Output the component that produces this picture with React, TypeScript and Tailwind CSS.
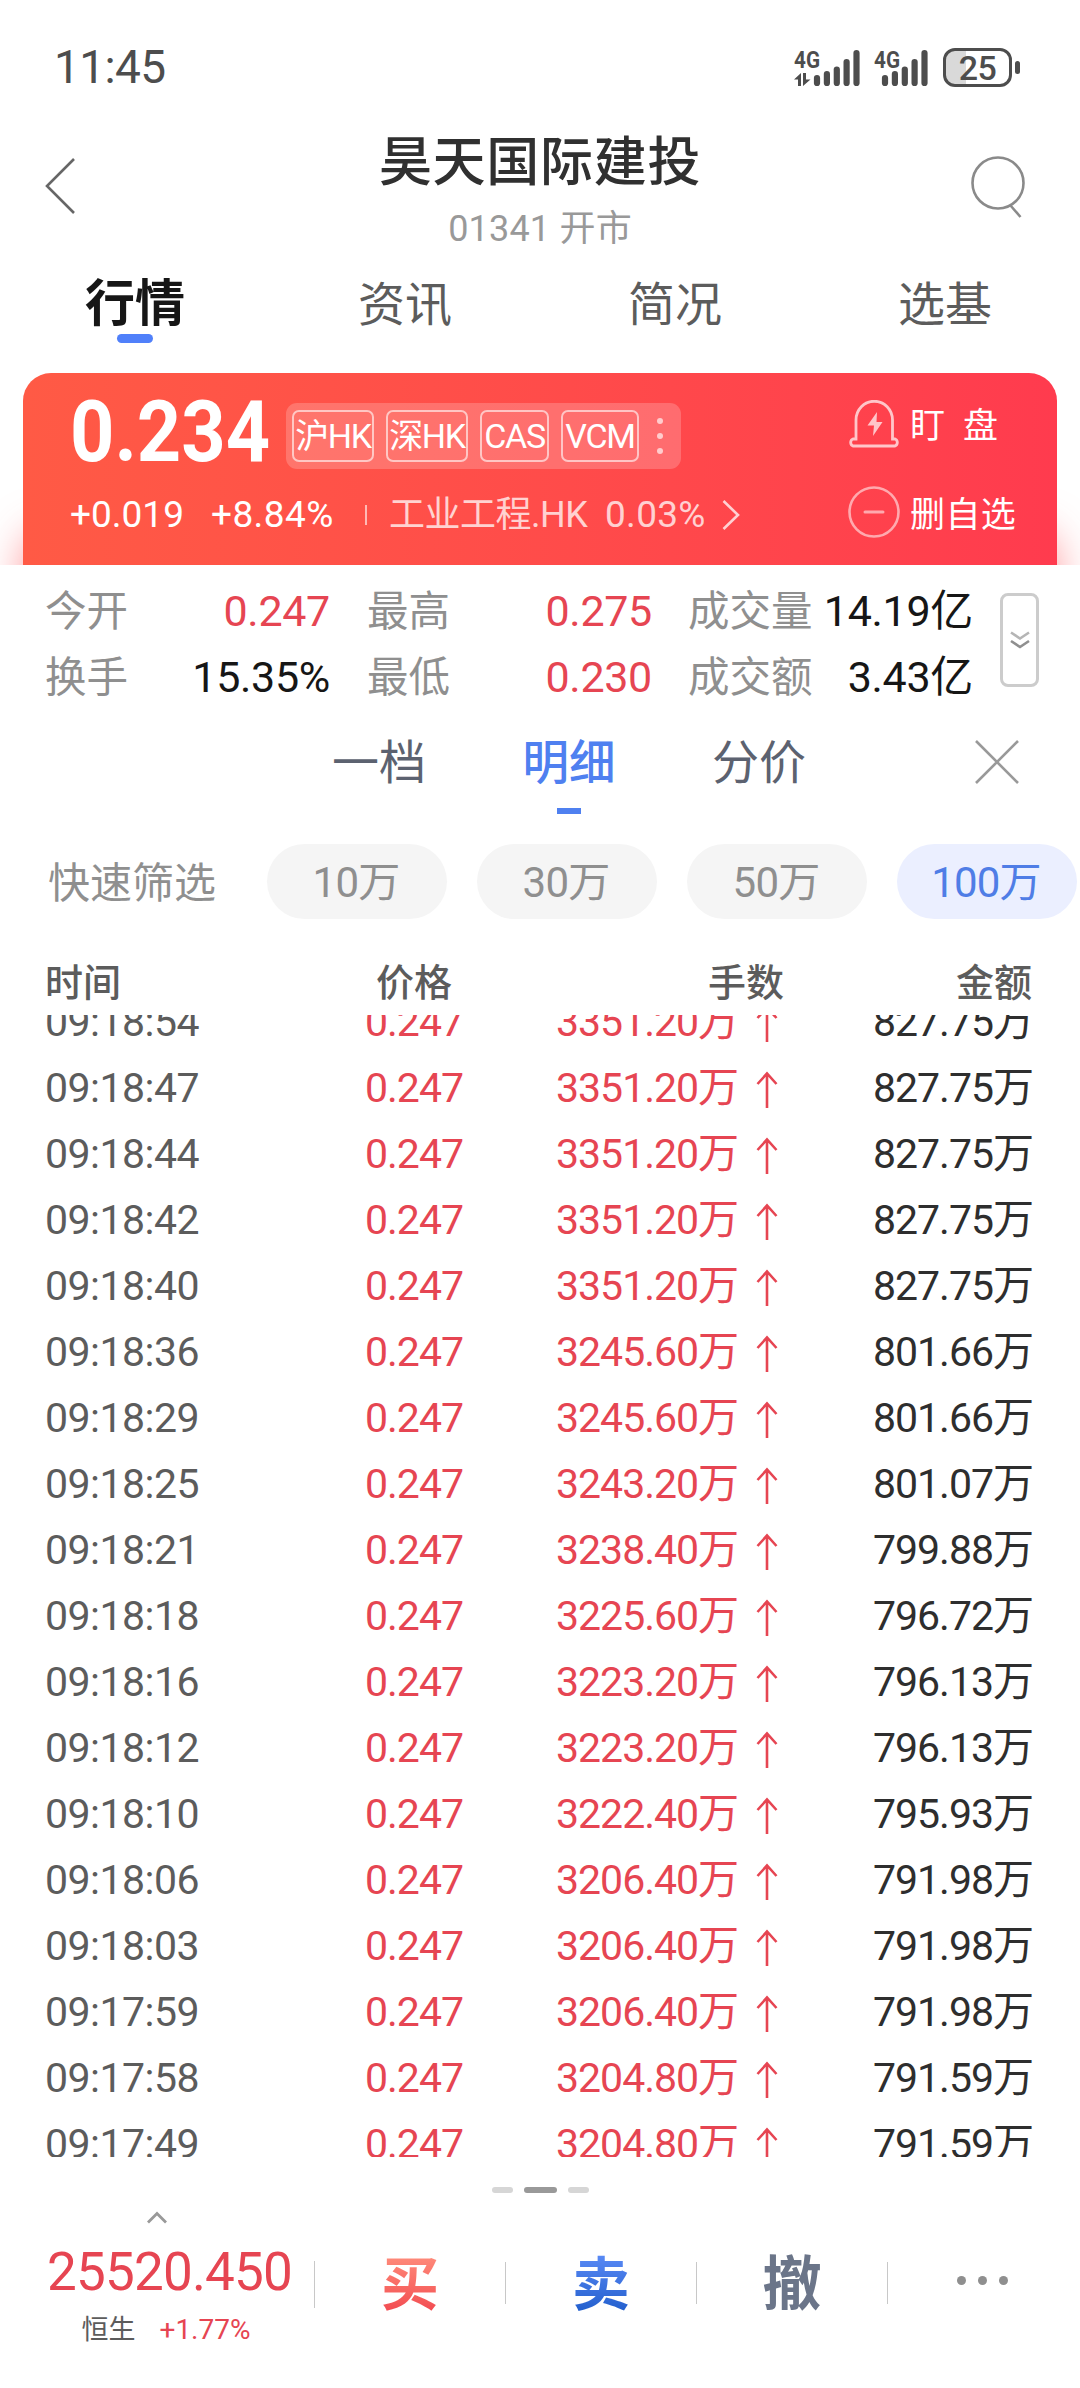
import React, { useState } from 'react';

type Trade = {
  time: string;
  volume: string;
  amount: string;
};

const tabs = ['行情', '资讯', '简况', '选基'];
const badges = [
  { label: '沪HK', width: 'w-[82px]' },
  { label: '深HK', width: 'w-[82px]' },
  { label: 'CAS', width: 'w-[69px]' },
  { label: 'VCM', width: 'w-[78px]' },
];
const detailTabs = ['一档', '明细', '分价'];
const filters = ['10万', '30万', '50万', '100万'];

const trades: Trade[] = [
  { time: '09:18:54', volume: '3351.20万', amount: '827.75万' },
  { time: '09:18:47', volume: '3351.20万', amount: '827.75万' },
  { time: '09:18:44', volume: '3351.20万', amount: '827.75万' },
  { time: '09:18:42', volume: '3351.20万', amount: '827.75万' },
  { time: '09:18:40', volume: '3351.20万', amount: '827.75万' },
  { time: '09:18:36', volume: '3245.60万', amount: '801.66万' },
  { time: '09:18:29', volume: '3245.60万', amount: '801.66万' },
  { time: '09:18:25', volume: '3243.20万', amount: '801.07万' },
  { time: '09:18:21', volume: '3238.40万', amount: '799.88万' },
  { time: '09:18:18', volume: '3225.60万', amount: '796.72万' },
  { time: '09:18:16', volume: '3223.20万', amount: '796.13万' },
  { time: '09:18:12', volume: '3223.20万', amount: '796.13万' },
  { time: '09:18:10', volume: '3222.40万', amount: '795.93万' },
  { time: '09:18:06', volume: '3206.40万', amount: '791.98万' },
  { time: '09:18:03', volume: '3206.40万', amount: '791.98万' },
  { time: '09:17:59', volume: '3206.40万', amount: '791.98万' },
  { time: '09:17:58', volume: '3204.80万', amount: '791.59万' },
  { time: '09:17:49', volume: '3204.80万', amount: '791.59万' },
];

function Signal({ data }: { data?: boolean }) {
  // the SIM that carries data has its bars pushed right by the arrows
  const x = data ? 23 : 11;
  return (
    <svg className="overflow-visible" width={data ? 68 : 56} height="40" viewBox={data ? '0 0 68 40' : '0 0 56 40'} fill="none">
      <text x="0" y="19.5" fontSize="24.5" fontWeight="700" fill="#4d4d4d" textLength="26" lengthAdjust="spacingAndGlyphs">
        4G
      </text>
      {data && (
        <path
          d="M0 31.5L7 25V38H4V31.500ZM9 25H12V31.500H16.500L9 38Z"
          fill="#4d4d4d"
        />
      )}
      <g stroke="#4d4d4d" strokeWidth="6.2" strokeLinecap="round">
        <path d={`M${x} 30V35`} />
        <path d={`M${x + 9.9} 26V35`} />
        <path d={`M${x + 19.8} 21.5V35`} />
        <path d={`M${x + 29.6} 14V35`} />
        <path d={`M${x + 39.5} 5V35`} />
      </g>
    </svg>
  );
}

function StatusBar() {
  return (
    <div className="flex h-[135px] items-center pl-[54px] pr-[60px] text-[#4d4d4d]">
      <span className="text-[46px] tracking-[-0.6px]">11:45</span>
      <div className="ml-auto flex items-center">
        <Signal data />
        <div className="ml-[12px]">
          <Signal />
        </div>
        <div className="ml-[13px] flex h-[39px] w-[69px] items-center justify-center rounded-[12px] border-[3px] border-[#4d4d4d] bg-linear-to-r from-[#d9d9d9] from-31% to-white to-31% text-[34px] leading-none font-medium tracking-[-0.5px]">
          25
        </div>
        <div className="ml-[3px] h-[13px] w-[5px] rounded-full bg-[#4d4d4d]" />
      </div>
    </div>
  );
}

function Header() {
  return (
    <header className="grid h-[127px] grid-cols-[200px_1fr_200px] items-start pl-[44px] pr-[44px]">
      <svg className="mt-[22px]" width="32" height="58" viewBox="0 0 32 58" fill="none">
        <path d="M30 2L3 29L30 56" stroke="#666" strokeWidth="2.6" />
      </svg>
      <div className="flex flex-col items-center">
        <h1 className="mt-[1px] text-[53px] leading-[54px] font-medium tracking-[0.7px] text-[#303030]">昊天国际建投</h1>
        <p className="mt-[12px] text-[36px] leading-[54px] tracking-[0.2px] text-[#999]">01341 开市</p>
      </div>
      <svg className="mt-[20px] mr-[10px] justify-self-end" width="56" height="64" viewBox="0 0 56 64" fill="none" stroke="#8a8a8a" strokeWidth="2.6">
        <circle cx="28" cy="28" r="25.5" />
        <path d="M40.5 50.5L50.5 62" />
      </svg>
    </header>
  );
}

function Tabs() {
  const [active, setActive] = useState('行情');

  return (
    <nav className="grid h-[111px] grid-cols-4 pt-[12px]">
      {tabs.map((tab) => (
        <button key={tab} onClick={() => setActive(tab)} className="flex flex-col items-center">
          <span
            className={
              active === tab
                ? 'text-[50px] leading-[60px] font-bold text-[#161616]'
                : 'text-[47px] leading-[61px] text-[#5c5c5c]'
            }
          >
            {tab}
          </span>
          {active === tab && <span className="h-[9px] w-[36px] rounded-full bg-[#5080fa]" />}
        </button>
      ))}
    </nav>
  );
}

function PriceCard() {
  return (
    <section className="h-[192px] overflow-hidden px-[23px]">
      <div className="flex h-full rounded-t-[28px] bg-linear-to-r from-[#ff5a45] to-[#ff3b4e] pl-[47px] text-white shadow-[0_158px_40px_0_rgba(255,70,75,0.55)]">
        <div className="w-[778px]">
          <div className="mt-[30px] flex h-[66px] items-center">
            <span className="w-[216px] origin-left scale-x-90 pb-[8px] text-[86px] leading-[66px] font-bold">0.234</span>
            <div className="flex h-[66px] w-[395px] items-center gap-[12px] rounded-[11px] bg-white/20 pl-[6px]">
              {badges.map((badge) => (
                <span
                  key={badge.label}
                  className={`${badge.width} flex h-[52px] items-center justify-center rounded-[7px] border-2 border-white/60 text-[34px] leading-none tracking-[-1.3px] whitespace-nowrap`}
                >
                  {badge.label}
                </span>
              ))}
              <span className="ml-[6px] flex flex-col gap-[9px]">
                <i className="size-[6px] rounded-full bg-white/65" />
                <i className="size-[6px] rounded-full bg-white/65" />
                <i className="size-[6px] rounded-full bg-white/65" />
              </span>
            </div>
          </div>
          <div className="mt-[21px] flex h-[50px] items-center text-[37px] whitespace-nowrap">
            <span className="w-[141px]">+0.019</span>
            <span className="w-[154px] tracking-[0.4px]">+8.84%</span>
            <span className="mr-[22px] h-[20px] w-[2px] bg-white/60" />
            <span className="w-[216px] text-[36px] tracking-[-0.5px] text-white/75">工业工程.HK</span>
            <span className="w-[116px] tracking-[0.3px] text-white/75">0.03%</span>
            <svg width="20" height="32" viewBox="0 0 20 32" fill="none">
              <path d="M2.5 2L17 16L2.5 30" stroke="white" strokeOpacity="0.75" strokeWidth="2.6" />
            </svg>
          </div>
        </div>
        <div className="flex flex-col text-[35px] leading-[50px]">
          <div className="mt-[26px] flex h-[50px] items-center">
            <svg width="52" height="48" viewBox="0 0 52 48" fill="none">
              <path
                d="M8 39V20A18 18.5 0 0 1 44.5 20V39H47A3.8 3.8 0 0 1 47 46H5A3.8 3.8 0 0 1 5 39Z"
                stroke="white"
                strokeOpacity="0.7"
                strokeWidth="2.8"
              />
              <path d="M29 12L19.5 25.5H26L25 36L34.5 22H28.5Z" fill="white" fillOpacity="0.7" />
            </svg>
            <span className="ml-[10px] pt-[5px]">盯</span>
            <span className="ml-[18px] pt-[5px]">盘</span>
          </div>
          <div className="mt-[38px] flex h-[50px] items-center">
            <svg width="52" height="52" viewBox="0 0 52 52" fill="none" stroke="white">
              <circle cx="26" cy="26" r="24.5" strokeOpacity="0.55" strokeWidth="2.6" />
              <path d="M17 26H35" strokeOpacity="0.55" strokeWidth="3" strokeLinecap="round" />
            </svg>
            <span className="ml-[10px] pt-[7px] tracking-[0.4px]">删自选</span>
          </div>
        </div>
      </div>
    </section>
  );
}

function Stat({ label, value, red }: { label: string; value: string; red?: boolean }) {
  return (
    <div className="flex h-[66px] items-center justify-between whitespace-nowrap">
      <span className="pt-[3px] text-[41.5px] text-[#8f8f8f]">{label}</span>
      <span className={red ? 'text-[43px] tracking-[-0.3px] text-[#e64552]' : 'text-[43px] tracking-[-0.3px] text-[#161616]'}>
        {value}
      </span>
    </div>
  );
}

function Stats() {
  return (
    <section className="flex h-[145px] pt-[13px] pl-[45px]">
      <div className="w-[285px]">
        <Stat label="今开" value="0.247" red />
        <Stat label="换手" value="15.35%" />
      </div>
      <div className="ml-[37px] w-[285px]">
        <Stat label="最高" value="0.275" red />
        <Stat label="最低" value="0.230" red />
      </div>
      <div className="ml-[36px] w-[285px]">
        <Stat label="成交量" value="14.19亿" />
        <Stat label="成交额" value="3.43亿" />
      </div>
      <button className="mt-[15px] ml-[27px] flex h-[94px] w-[39px] items-center justify-center rounded-[8px] border-[3px] border-[#ccc]">
        <svg width="20" height="18" viewBox="0 0 20 18" fill="none" strokeWidth="2.6">
          <path d="M1 1.5L10 7.5L19 1.5" stroke="#b5b5b5" />
          <path d="M1 10L10 16L19 10" stroke="#8f8f8f" />
        </svg>
      </button>
    </section>
  );
}

function DetailTabs() {
  const [active, setActive] = useState('明细');

  return (
    <nav className="flex h-[134px] pt-[23px] pl-[284px]">
      {detailTabs.map((tab) => (
        <button key={tab} onClick={() => setActive(tab)} className="flex w-[190px] flex-col items-center">
          <span
            className={
              active === tab
                ? 'text-[46.5px] leading-[60px] font-medium text-[#4f80f0]'
                : 'text-[47px] leading-[60px] text-[#5c6270]'
            }
          >
            {tab}
          </span>
          {active === tab && <span className="mt-[15px] h-[6px] w-[24px] bg-[#4f80f0]" />}
        </button>
      ))}
      <svg className="mt-[6px] ml-[120px]" width="46" height="46" viewBox="0 0 46 46" fill="none">
        <path d="M2 2L44 44M44 2L2 44" stroke="#999" strokeWidth="2.6" />
      </svg>
    </nav>
  );
}

function Filters() {
  const [active, setActive] = useState('100万');

  return (
    <div className="flex h-[75px] items-center pl-[48px]">
      <span className="w-[219px] pt-[3px] text-[42px] text-[#8f8f8f]">快速筛选</span>
      <div className="flex gap-[30px]">
        {filters.map((item) => (
          <button
            key={item}
            onClick={() => setActive(item)}
            className={`flex h-[75px] w-[180px] items-center justify-center rounded-full pt-[2px] pr-[2px] text-[42px] tracking-[-0.8px] ${
              active === item ? 'bg-[#ebefff] text-[#4f7de6]' : 'bg-[#f5f5f5] text-[#8f8f8f]'
            }`}
          >
            {item}
          </button>
        ))}
      </div>
    </div>
  );
}

function TradeTable() {
  return (
    <section>
      <div className="mt-[31px] flex h-[65px] items-center pl-[45px] text-[38px] leading-none font-medium text-[#5c5c5c]">
        <span className="w-[331px]">时间</span>
        <span className="w-[332px]">价格</span>
        <span className="w-[248px]">手数</span>
        <span>金额</span>
      </div>
      <div className="h-[1142px] overflow-hidden">
        <div className="-mt-[26px]">
          {trades.map((trade) => (
            <div
              key={trade.time}
              className="flex h-[66px] items-center pl-[45px] text-[41px] leading-none tracking-[-1px] whitespace-nowrap"
            >
              <span className="w-[320px] tracking-[-0.5px] text-[#5c5c5c]">{trade.time}</span>
              <span className="w-[191px] text-[#e64552]">0.247</span>
              <span className="w-[200px] text-[#e64552]">{trade.volume}</span>
              <svg className="mt-[3px]" width="22" height="38" viewBox="0 0 22 38" fill="none">
                <path d="M11 37V2.5M1.5 13L11 2.5L20.5 13" stroke="#e64552" strokeWidth="2.6" />
              </svg>
              <span className="ml-auto mr-[47px] text-[#2e2e2e]">{trade.amount}</span>
            </div>
          ))}
        </div>
      </div>
    </section>
  );
}

function BottomBar() {
  return (
    <footer className="flex h-[177px]">
      <div className="flex w-[314px] flex-col items-center">
        <svg width="22" height="13" viewBox="0 0 22 13" fill="none">
          <path d="M2 11.5L11 2.5L20 11.5" stroke="#999" strokeWidth="2.8" />
        </svg>
        <span className="mt-[18px] ml-[25px] text-[53px] leading-[60px] tracking-[-0.8px] text-[#e64552]">25520.450</span>
        <div className="mt-[10px] ml-[18px] flex h-[36px] items-center gap-[24px]">
          <span className="text-[27px] text-[#5c5c5c]">恒生</span>
          <span className="text-[28px] text-[#e64552]">+1.77%</span>
        </div>
      </div>
      <div className="mt-[50px] h-[47px] w-px bg-[#c8c8c8]" />
      <button className="mt-[38px] h-[72px] w-[190px] text-center text-[58px] leading-[72px] font-bold">
        <span className="bg-linear-to-b from-[#ff8f7e] to-[#f0404c] bg-clip-text text-transparent">买</span>
      </button>
      <div className="mt-[51px] h-[42px] w-px bg-[#c8c8c8]" />
      <button className="mt-[38px] h-[72px] w-[190px] text-center text-[58px] leading-[72px] font-bold">
        <span className="bg-linear-to-b from-[#5c8cf8] to-[#1a5ac8] bg-clip-text text-transparent">卖</span>
      </button>
      <div className="mt-[51px] h-[42px] w-px bg-[#c8c8c8]" />
      <button className="mt-[38px] h-[72px] w-[190px] text-center text-[59px] leading-[72px] font-bold text-[#6b7589]">
        撤
      </button>
      <div className="mt-[51px] h-[42px] w-px bg-[#c8c8c8]" />
      <div className="mt-[65px] ml-[69px] flex h-[10px] gap-[12px]">
        <i className="size-[9px] rounded-full bg-[#8f8f8f]" />
        <i className="size-[9px] rounded-full bg-[#8f8f8f]" />
        <i className="size-[9px] rounded-full bg-[#8f8f8f]" />
      </div>
    </footer>
  );
}

export default function App() {
  return (
    <div className="h-[2388px] w-[1080px] overflow-hidden bg-white font-['Roboto','Noto_Sans_CJK_SC',sans-serif]">
      <StatusBar />
      <Header />
      <Tabs />
      <PriceCard />
      <Stats />
      <DetailTabs />
      <Filters />
      <TradeTable />
      <div className="flex h-[54px] justify-center gap-[11px] pt-[30px]">
        <span className="h-[6px] w-[21px] rounded-full bg-[#d6d6d6]" />
        <span className="h-[6px] w-[33px] rounded-full bg-[#999]" />
        <span className="h-[6px] w-[21px] rounded-full bg-[#d6d6d6]" />
      </div>
      <BottomBar />
    </div>
  );
}
